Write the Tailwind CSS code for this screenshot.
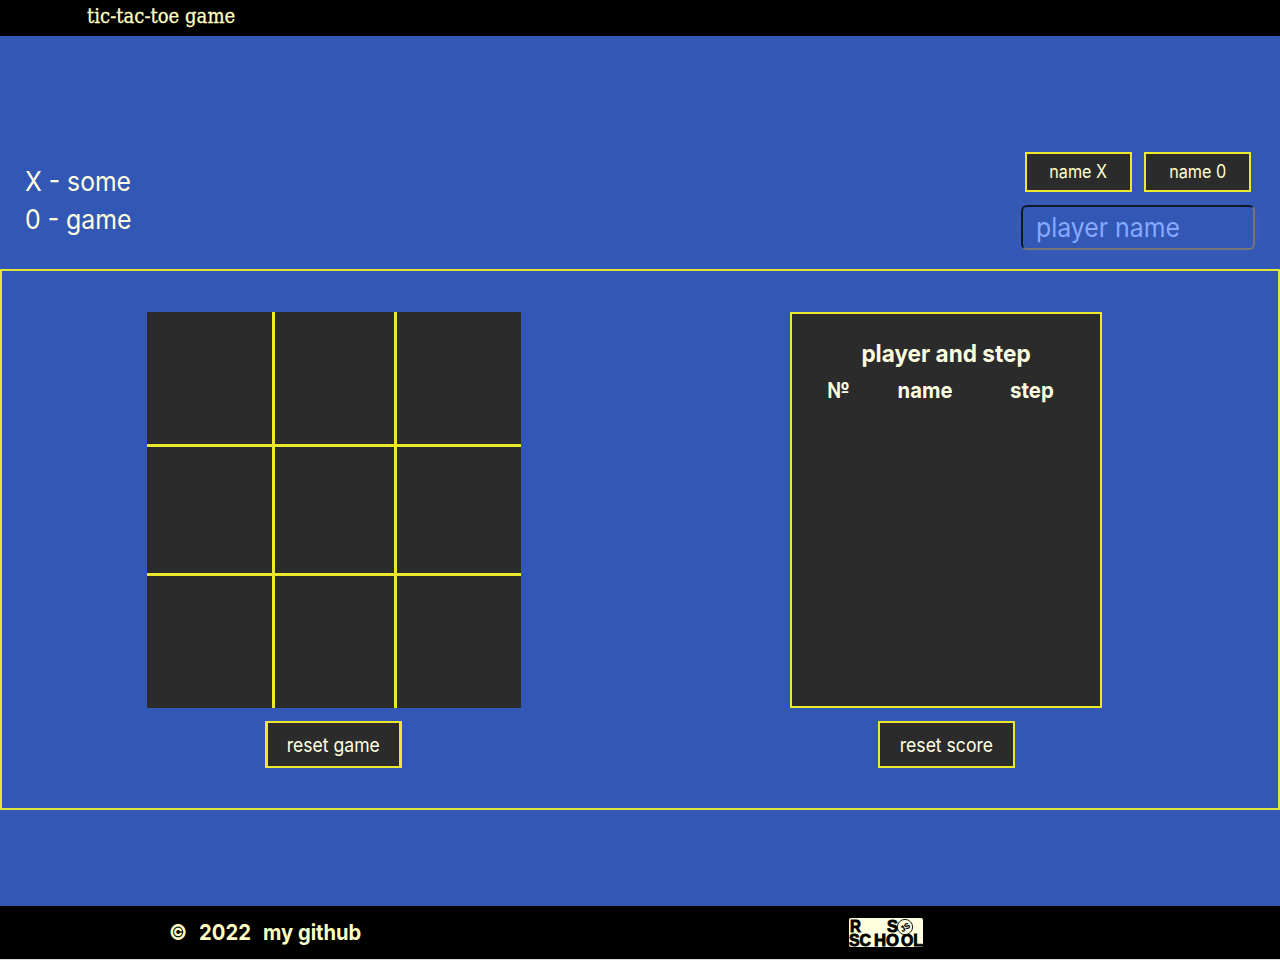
<!DOCTYPE html>
<html lang="en">
<head>
<meta charset="utf-8">
<title>tic-tac-toe game</title>
<script src="https://cdn.jsdelivr.net/npm/@tailwindcss/browser@4"></script>
</head>
<body class="h-[960px] w-[1280px] overflow-hidden bg-[#3357b5] font-['Inter',sans-serif] text-[#ffffe0]">
<div class="flex h-full flex-col">
  <header class="h-9 shrink-0 bg-black pl-[87px]">
    <h1 class="w-max origin-left scale-x-[0.86] whitespace-nowrap font-['DejaVu_Serif',serif] text-[21px] leading-8 text-[#ffffc4] [-webkit-text-stroke:0.3px_#ffffc4]">tic-tac-toe game</h1>
  </header>
  <section class="flex h-[233px] shrink-0 justify-between pt-[116px] pr-[25px] pl-[25px]">
    <div class="pt-[11px] text-[27px] leading-[37.5px]">
      <p class="w-max origin-left scale-x-[0.915]">X - some</p>
      <p class="w-max origin-left scale-x-[0.92]">0 - game</p>
    </div>
    <div class="w-[234px]">
      <div class="flex gap-[12px] pl-1 text-[18px]">
        <button class="flex h-10 w-[107px] items-center justify-center border-2 border-[#ece82c] bg-[#2b2b2b] pb-px text-[#ffffd0]"><span class="inline-block scale-x-[0.9] whitespace-nowrap">name X</span></button>
        <button class="flex h-10 w-[107px] items-center justify-center border-2 border-[#ece82c] bg-[#2b2b2b] pb-px text-[#ffffd0]"><span class="inline-block scale-x-[0.9] whitespace-nowrap">name 0</span></button>
      </div>
      <div class="mt-[13px] flex h-[45px] items-center rounded-md border-2 border-t-[#10182c] border-r-[#767676] border-b-[#767676] border-l-[#10182c] pt-px pl-[13px] text-[27px] text-[#86a9ff] shadow-[0_0_24px_rgba(255,255,255,0.06)]"><span class="inline-block origin-left scale-x-[0.92] whitespace-nowrap">player name</span></div>
    </div>
  </section>
  <main class="flex h-[541px] shrink-0 border-2 border-[#dfe33c] pt-[41px]">
    <div class="ml-[145px] flex w-[374px] shrink-0 flex-col items-center">
      <div class="grid h-[396px] w-full grid-cols-[125px_119px_124px] grid-rows-[132px_126px_132px] gap-[3px] bg-[#2b2b2b] bg-[linear-gradient(#ece82c,#ece82c),linear-gradient(#ece82c,#ece82c),linear-gradient(#ece82c,#ece82c),linear-gradient(#ece82c,#ece82c)] bg-[position:125px_0,247px_0,0_132px,0_261px] bg-[size:3px_100%,3px_100%,100%_3px,100%_3px] bg-no-repeat">
        <div></div><div></div><div></div><div></div><div></div><div></div><div></div><div></div><div></div>
      </div>
      <button class="mt-[13px] mr-px flex h-[47px] w-[137px] items-center justify-center border-x-3 border-y-2 border-[#ece82c] bg-[#2b2b2b] pt-[3px] text-[19px]"><span class="inline-block scale-x-[0.925] whitespace-nowrap">reset game</span></button>
    </div>
    <div class="ml-[269px] flex w-[312px] shrink-0 flex-col items-center">
      <div class="h-[396px] w-full border-2 border-[#ece82c] bg-[#2b2b2b] pt-[21px] font-bold">
        <h2 class="mx-auto w-max scale-x-[0.94] whitespace-nowrap text-[24px] leading-[37px]">player and step</h2>
        <div class="-mt-px grid grid-cols-[93px_80px_134px] text-center text-[22px] leading-[38px]">
          <span class="scale-x-[0.93]">№</span><span class="scale-x-[0.92]">name</span><span class="scale-x-[0.93]">step</span>
        </div>
      </div>
      <button class="mt-[13px] flex h-[47px] w-[137px] items-center justify-center border-2 border-[#ece82c] bg-[#2b2b2b] pt-[3px] text-[19px]"><span class="inline-block scale-x-[0.925] whitespace-nowrap">reset score</span></button>
    </div>
  </main>
  <div class="h-24 shrink-0"></div>
  <footer class="flex h-[54px] shrink-0 items-center justify-between border-b border-[#dcdcdc] bg-black pr-[357px] pl-[169px] text-[22px] font-bold text-[#ffffc4]">
    <div class="flex">
      <span class="w-[30px]"><span class="inline-block origin-left scale-x-[0.9]">©</span></span>
      <span class="w-16"><span class="inline-block origin-left scale-x-[0.92]">2022</span></span>
      <a class="inline-block origin-left scale-x-[0.915] whitespace-nowrap">my github</a>
    </div>
    <svg class="h-[29px] w-[74px] overflow-visible" viewBox="0 0 74 29">
      <rect width="74" height="29" rx="2" fill="#ffffe0"/>
      <g font-family="Liberation Sans, sans-serif" font-weight="700" font-size="17" fill="#000" stroke="#000" stroke-width=".9">
        <text x="1" y="13.5" textLength="11" lengthAdjust="spacingAndGlyphs">R</text><text x="38" y="13.5" textLength="11" lengthAdjust="spacingAndGlyphs">S</text>
        <text x="0" y="28" textLength="22" lengthAdjust="spacingAndGlyphs">SC</text>
        <text x="25" y="28" textLength="25" lengthAdjust="spacingAndGlyphs">HO</text>
        <text x="52" y="28" textLength="22" lengthAdjust="spacingAndGlyphs">OL</text>
      </g>
      <circle cx="56" cy="9" r="7.6" fill="#ffffe0" stroke="#000" stroke-width=".9"/>
      <text x="56" y="12" transform="rotate(-32 56 9)" text-anchor="middle" font-family="Liberation Sans, sans-serif" font-weight="700" font-size="8" fill="#000" stroke="#000" stroke-width=".3">JS</text>
    </svg>
  </footer>
</div>
</body>
</html>
